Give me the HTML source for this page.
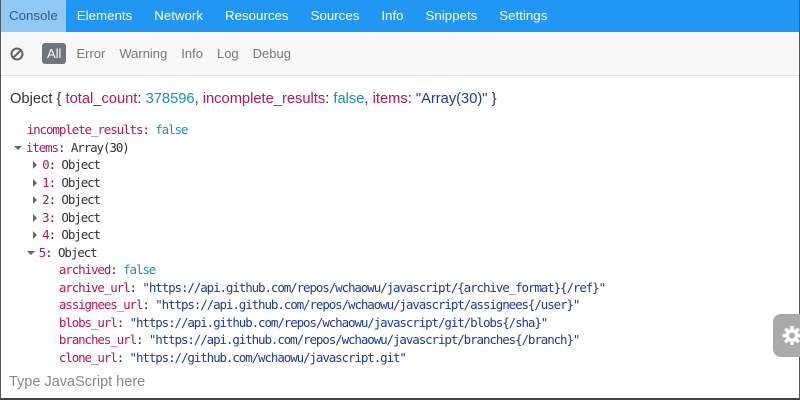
<!DOCTYPE html>
<html><head><style>
*{margin:0;padding:0;box-sizing:border-box}
body{width:800px;height:400px;overflow:hidden;background:#fff;font-family:"Liberation Sans",sans-serif;position:relative;border-left:1px solid #555;border-bottom:2px solid #444;border-right:1px solid #555}
.nav{height:32px;background:#2196f3;display:flex;font-size:13.3px;color:#fff}
.nav div{padding:0 11px;line-height:32px}
.nav .act{background:#90c8f6;color:#3a5a7a;padding:0 8px}
.tb{height:44px;background:#f8f8f9;border-bottom:1px solid #e4e4ec;display:flex;align-items:center;font-size:13px;color:#777}
.tb span{margin-right:14px}
.all{background:#6d757d;color:#fff!important;border-radius:3px;padding:3px 5px;margin-right:10px!important}
.obj{position:absolute;top:91px;left:9px;font-size:14.7px;color:#333}
.k{color:#b5175a}.n{color:#1b8fbf}.s{color:#213a99}
.mono{position:absolute;top:121px;left:0;right:0;height:245px;overflow:hidden;font-family:"DejaVu Sans Mono",monospace;font-size:12.5px;letter-spacing:-1.1px;color:#333}
.mono div{height:17.5px;line-height:17.5px;white-space:pre}
.tri{display:inline-block;width:0;height:0;border-left:4px solid #666;border-top:4px solid transparent;border-bottom:4px solid transparent;margin-right:5px;vertical-align:0}
.trd{display:inline-block;width:0;height:0;border-top:4px solid #666;border-left:4px solid transparent;border-right:4px solid transparent;margin-right:4px;vertical-align:2px}
.inp{position:absolute;top:374px;left:8px;font-size:14.5px;color:#888}
.gear{position:absolute;left:772px;top:314px;width:30px;height:43px;background:#aaa;border-radius:8px 0 0 8px}
</style></head><body>
<div class="nav"><div class="act">Console</div><div>Elements</div><div>Network</div><div>Resources</div><div>Sources</div><div>Info</div><div>Snippets</div><div>Settings</div></div>
<div class="tb">
<svg style="margin:0 18px 0 9px" width="14" height="14" viewBox="0 0 14 14"><circle cx="7" cy="7" r="5.5" fill="none" stroke="#666" stroke-width="2"/><line x1="3" y1="11" x2="11" y2="3" stroke="#666" stroke-width="2"/></svg>
<span class="all">All</span><span>Error</span><span>Warning</span><span>Info</span><span>Log</span><span>Debug</span></div>
<div class="obj">Object { <span class="k">total_count</span>: <span class="n">378596</span>, <span class="k">incomplete_results</span>: <span class="n">false</span>, <span class="k">items</span>: <span class="s">"Array(30)"</span> }</div>
<div class="mono">
<div>    <span class="k">incomplete_results</span>: <span class="n">false</span></div>
<div>  <span class="trd"></span><span class="k">items</span>: Array(30)</div>
<div>     <span class="tri"></span><span class="k">0</span>: Object</div>
<div>     <span class="tri"></span><span class="k">1</span>: Object</div>
<div>     <span class="tri"></span><span class="k">2</span>: Object</div>
<div>     <span class="tri"></span><span class="k">3</span>: Object</div>
<div>     <span class="tri"></span><span class="k">4</span>: Object</div>
<div>    <span class="trd"></span><span class="k">5</span>: Object</div>
<div>         <span class="k">archived</span>: <span class="n">false</span></div>
<div>         <span class="k">archive_url</span>: <span class="s">"https://api.github.com/repos/wchaowu/javascript/{archive_format}{/ref}"</span></div>
<div>         <span class="k">assignees_url</span>: <span class="s">"https://api.github.com/repos/wchaowu/javascript/assignees{/user}"</span></div>
<div>         <span class="k">blobs_url</span>: <span class="s">"https://api.github.com/repos/wchaowu/javascript/git/blobs{/sha}"</span></div>
<div>         <span class="k">branches_url</span>: <span class="s">"https://api.github.com/repos/wchaowu/javascript/branches{/branch}"</span></div>
<div>         <span class="k">clone_url</span>: <span class="s">"https://github.com/wchaowu/javascript.git"</span></div>
</div>
<div class="inp">Type JavaScript here</div>
<div class="gear"><svg width="30" height="43" viewBox="0 0 30 43"><g transform="translate(19 21.5)" fill="#fff"><circle r="6.5"/><g stroke="#fff" stroke-width="3.5"><line y1="-9.5" y2="9.5"/><line x1="-9.5" x2="9.5"/><line x1="-6.7" y1="-6.7" x2="6.7" y2="6.7"/><line x1="-6.7" y1="6.7" x2="6.7" y2="-6.7"/></g><circle r="3" fill="#aaa"/></g></svg></div>
</body></html>
